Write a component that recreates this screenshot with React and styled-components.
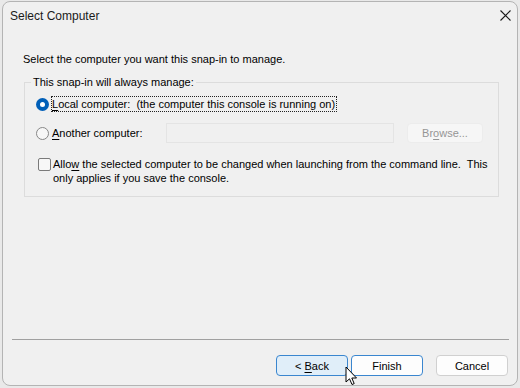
import React from "react";
import styled, { createGlobalStyle } from "styled-components";

const GlobalStyle = createGlobalStyle`
  html, body {
    margin: 0;
    padding: 0;
    background: #e9e9e9;
  }
  body {
    font-family: "Liberation Sans", Arial, sans-serif;
    font-size: 11px;
    color: #000;
  }
`;

const Screen = styled.div`
  width: 520px;
  height: 388px;
  padding: 1px 2px 2px 2px;
  box-sizing: border-box;
  position: relative;
  overflow: hidden;
`;

const Window = styled.div`
  height: 100%;
  box-sizing: border-box;
  background: #f0f0f0;
  border: 1px solid #b4b4b4;
  border-radius: 8px;
  display: flex;
  flex-direction: column;
`;

const TitleBar = styled.div`
  height: 28px;
  display: flex;
  align-items: center;
  justify-content: space-between;
  padding: 0 4px 0 7px;
`;

const Title = styled.div`
  font-size: 12px;
  color: #1a1a1a;
`;

const Close = styled.div`
  width: 16px;
  height: 16px;
  margin-top: -2px;
  display: flex;
  align-items: center;
  justify-content: center;
`;

const Body = styled.div`
  flex: 1;
  padding: 21px 19px 0 20px;
  display: flex;
  flex-direction: column;
`;

const Intro = styled.div`
  line-height: 16px;
`;

const Group = styled.fieldset`
  margin: 8px 0 0 1px;
  padding: 3px 10px 11px 11px;
  border: 1px solid #dcdcdc;
  border-radius: 0;
  display: flex;
  flex-direction: column;
`;

const Legend = styled.legend`
  padding: 0 2px;
  margin-left: -5px;
  line-height: 14px;
`;

const Row = styled.div`
  display: flex;
  align-items: ${(p) => (p.top ? "flex-start" : "center")};
  min-height: 20px;
  margin-top: ${(p) => p.mt || 0}px;
`;

const Radio = styled.span`
  width: 13px;
  height: 13px;
  box-sizing: border-box;
  border-radius: 50%;
  flex: none;
  margin-right: 3px;
  ${(p) =>
    p.checked
      ? `background: #005fb8; display:flex; align-items:center; justify-content:center;`
      : `border: 1px solid #878787; background: #f7f7f7;`}
`;

const Dot = styled.span`
  width: 5px;
  height: 5px;
  border-radius: 50%;
  background: #fff;
`;

const Focus = styled.span`
  outline: 1px dotted #222;
  outline-offset: 0;
  padding: 0 1px 0 0;
  line-height: 14px;
`;

const Label = styled.span`
  line-height: 14px;
  width: ${(p) => (p.w ? `${p.w}px` : "auto")};
  flex: none;
`;

const Input = styled.div`
  width: 228px;
  height: 20px;
  box-sizing: border-box;
  border: 1px solid #e4e4e4;
  background: #f0f0f0;
`;

const Button = styled.button`
  font: inherit;
  width: ${(p) => p.w || 72}px;
  height: ${(p) => p.h || 21}px;
  box-sizing: border-box;
  padding: 0;
  border-radius: 4px;
  border: 1px solid ${(p) => (p.accent ? "#3a86cf" : p.disabled ? "#ececec" : "#d0d0d0")};
  background: ${(p) => (p.hover ? "#e0eef9" : p.disabled ? "#f6f6f6" : "#fdfdfd")};
  color: ${(p) => (p.disabled ? "#959595" : "#000")};
`;

const Check = styled.span`
  width: 13px;
  height: 13px;
  box-sizing: border-box;
  border: 1px solid #7a7a7a;
  border-radius: 2px;
  background: #f7f7f7;
  flex: none;
  margin: 1px 2px 0 2px;
`;

const CheckText = styled.div`
  line-height: 14px;
  white-space: nowrap;
`;

const Separator = styled.div`
  height: 1px;
  background: #a0a0a0;
  margin: 0 8px 0 9px;
`;

const Footer = styled.div`
  display: flex;
  justify-content: flex-end;
  align-items: center;
  gap: 3px;
  padding: 15px 9px 9px 0;
`;

const Gap = styled.span`
  width: ${(p) => p.w}px;
  flex: none;
`;

const Cursor = styled.svg`
  position: absolute;
  left: 345px;
  top: 366px;
`;

const U = styled.u`
  text-decoration-thickness: 1px;
  text-underline-offset: 2px;
`;

export default function App() {
  return (
    <>
      <GlobalStyle />
      <Screen>
        <Window>
          <TitleBar>
            <Title>Select Computer</Title>
            <Close>
              <svg width="11" height="11" viewBox="0 0 11 11">
                <path d="M0.5 0.5L10.5 10.5M10.5 0.5L0.5 10.5" stroke="#1a1a1a" strokeWidth="1.1" />
              </svg>
            </Close>
          </TitleBar>
          <Body>
            <Intro>Select the computer you want this snap-in to manage.</Intro>
            <Group>
              <Legend>This snap-in will always manage:</Legend>
              <Row mt={2}>
                <Radio checked>
                  <Dot />
                </Radio>
                <Focus>
                  <U>L</U>ocal computer:&nbsp; (the computer this console is running on)
                </Focus>
              </Row>
              <Row mt={9}>
                <Radio />
                <Label w={114}>
                  <U>A</U>nother computer:
                </Label>
                <Input />
                <Gap w={13} />
                <Button w={76} h={20} disabled>
                  Br<U>o</U>wse...
                </Button>
              </Row>
              <Row top mt={14}>
                <Check />
                <CheckText>
                  Allo<U>w</U> the selected computer to be changed when launching from the command line.&nbsp; This
                  <br />
                  only applies if you save the console.
                </CheckText>
              </Row>
            </Group>
          </Body>
          <Separator />
          <Footer>
            <Button accent hover>
              &lt; <U>B</U>ack
            </Button>
            <Button accent>Finish</Button>
            <Gap w={7} />
            <Button>Cancel</Button>
          </Footer>
        </Window>
        <Cursor width="14" height="22" viewBox="0 0 14 22">
          <path
            d="M1 1 L1 16 L4.5 12.8 L7 18.5 L9.2 17.6 L6.8 12 L11.5 12 Z"
            fill="#fff"
            stroke="#000"
            strokeWidth="1"
            strokeLinejoin="round"
          />
        </Cursor>
      </Screen>
    </>
  );
}
